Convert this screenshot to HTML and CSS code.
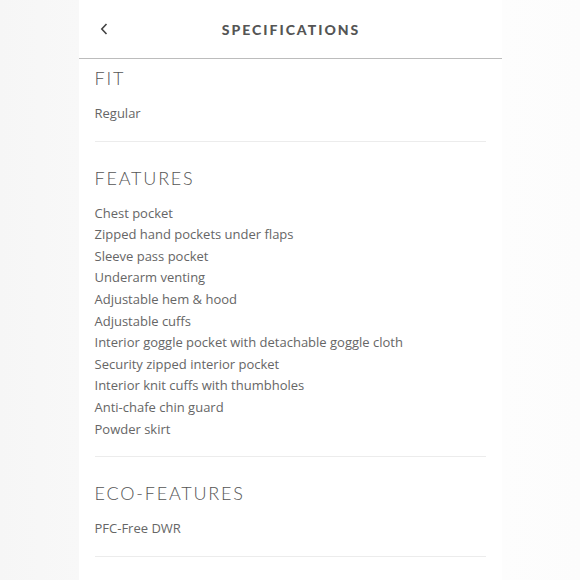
FILE: index.html
```html
<!DOCTYPE html>
<html lang="en">
<head>
<meta charset="utf-8">
<title>Specifications</title>
<link rel="stylesheet" href="styles.css">
</head>
<body>
<div class="panel">
  <header class="top">
    <button class="back" aria-label="Back">
      <svg width="8" height="12" viewBox="0 0 8 12"><path d="M6.5 1 L1.8 6 L6.5 11" fill="none" stroke="#444" stroke-width="1.6"/></svg>
    </button>
    <h1 class="title">SPECIFICATIONS</h1>
  </header>
  <div class="content">
    <section class="spec first">
      <h2 class="spec-title">FIT</h2>
      <ul class="spec-list">
        <li>Regular</li>
      </ul>
    </section>
    <section class="spec">
      <h2 class="spec-title">FEATURES</h2>
      <ul class="spec-list">
        <li>Chest pocket</li>
        <li>Zipped hand pockets under flaps</li>
        <li>Sleeve pass pocket</li>
        <li>Underarm venting</li>
        <li>Adjustable hem &amp; hood</li>
        <li>Adjustable cuffs</li>
        <li>Interior goggle pocket with detachable goggle cloth</li>
        <li>Security zipped interior pocket</li>
        <li>Interior knit cuffs with thumbholes</li>
        <li>Anti-chafe chin guard</li>
        <li>Powder skirt</li>
      </ul>
    </section>
    <section class="spec">
      <h2 class="spec-title">ECO-FEATURES</h2>
      <ul class="spec-list">
        <li>PFC-Free DWR</li>
      </ul>
    </section>
  </div>
</div>
</body>
</html>
```
FILE: styles.css
```css
html, body {
  margin: 0;
  padding: 0;
  height: 100%;
}
body {
  background: linear-gradient(to right, #f6f6f6 0, #f8f8f8 79px, #fdfdfd 502px, #fcfcfc 100%);
  display: flex;
  justify-content: center;
  font-family: "Open Sans", "Liberation Sans", sans-serif;
  overflow: hidden;
}
.panel {
  width: 423px;
  background: #fff;
  min-height: 100%;
}
.top {
  height: 58px;
  border-bottom: 1px solid #bcbcbc;
  display: flex;
  align-items: center;
  justify-content: center;
  position: relative;
}
.back {
  position: absolute;
  left: 21px;
  top: 23px;
  border: 0;
  background: none;
  padding: 0;
  width: 8px;
  height: 12px;
  display: flex;
}
.title {
  margin: 0;
  font-family: Lato, "Liberation Sans", sans-serif;
  font-weight: 900;
  font-size: 14px;
  letter-spacing: 2px;
  color: #555;
  padding-left: 2px;
}
.content {
  padding: 0 16px;
}
.spec {
  border-bottom: 1px solid #ececec;
  padding: 24px 0 16px;
}
.spec.first {
  padding-top: 7px;
}
.spec-title {
  margin: 0 0 13px;
  font-family: Lato, "Liberation Sans", sans-serif;
  font-weight: 300;
  font-size: 18px;
  line-height: 24px;
  letter-spacing: 1.8px;
  color: #555;
}
.spec-list {
  list-style: none;
  margin: 0;
  padding: 0;
  font-size: 13px;
  line-height: 21.6px;
  color: #666;
}
```
